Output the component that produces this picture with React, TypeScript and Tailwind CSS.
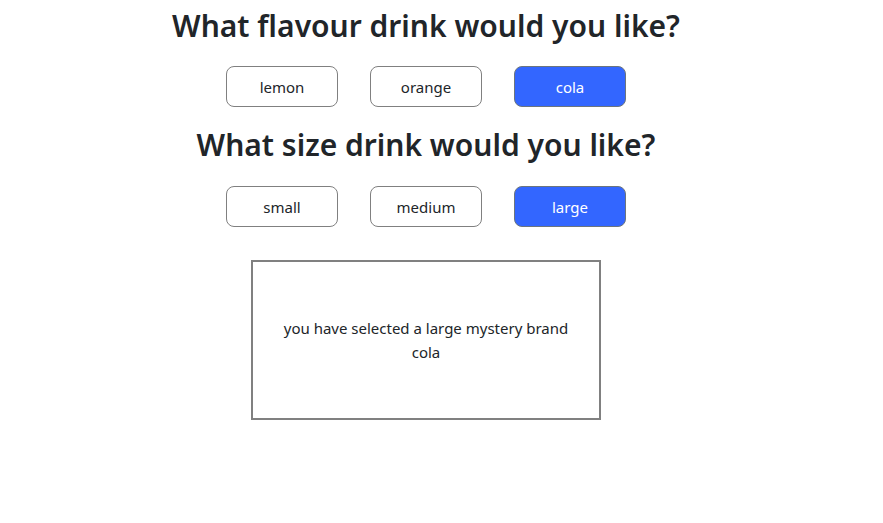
const flavours = ["lemon", "orange", "cola"];
const sizes = ["small", "medium", "large"];

function Choice({ label, active }: { label: string; active: boolean }) {
  return (
    <button
      className={
        active
          ? "w-[112px] h-[41px] pt-[2px] rounded-lg border border-[#6c757d] bg-[#3366ff] text-white text-[15px]"
          : "w-[112px] h-[41px] pt-[2px] rounded-lg border border-[#808080] bg-white text-[#212529] text-[15px]"
      }
    >
      {label}
    </button>
  );
}

export default function App() {
  return (
    <div
      className="w-[852px] bg-white text-[#212529] flex flex-col items-center"
      style={{ fontFamily: '"Noto Sans", "Open Sans", sans-serif' }}
    >
      <h2 className="text-[30px] font-semibold leading-[38px] mt-[7px]">What flavour drink would you like?</h2>
      <div className="flex gap-8 mt-[21px]">
        {flavours.map((f) => (
          <Choice key={f} label={f} active={f === "cola"} />
        ))}
      </div>
      <h2 className="text-[30px] font-semibold leading-[38px] mt-[19px]">What size drink would you like?</h2>
      <div className="flex gap-8 mt-[22px]">
        {sizes.map((s) => (
          <Choice key={s} label={s} active={s === "large"} />
        ))}
      </div>
      <div className="mt-[33px] w-[350px] h-[160px] border-2 border-[#808080] flex items-center justify-center px-4 text-center text-[15px] leading-6">
        you have selected a large mystery brand cola
      </div>
    </div>
  );
}
